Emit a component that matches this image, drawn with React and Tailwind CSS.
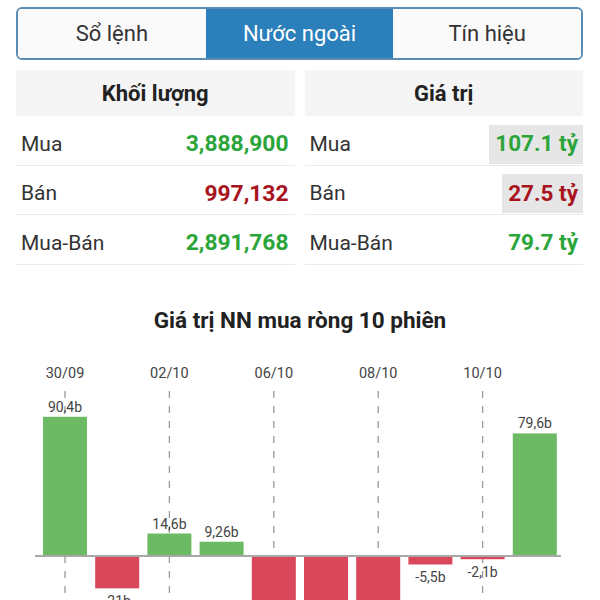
import React from 'react';

const tabs = ['Sổ lệnh', 'Nước ngoài', 'Tín hiệu'];

const volumeRows = [
  { label: 'Mua', value: '3,888,900', tone: 'text-[#2ba53a]' },
  { label: 'Bán', value: '997,132', tone: 'text-[#a8141e]' },
  { label: 'Mua-Bán', value: '2,891,768', tone: 'text-[#2ba53a]' },
];

const valueRows = [
  { label: 'Mua', value: '107.1 tỷ', tone: 'text-[#2ba53a]', hl: true },
  { label: 'Bán', value: '27.5 tỷ', tone: 'text-[#a8141e]', hl: true },
  { label: 'Mua-Bán', value: '79.7 tỷ', tone: 'text-[#2ba53a]', hl: false },
];

// net foreign buy per session (b = tỷ); labels of the deep red bars fall below the fold
const bars = [
  { v: 90.4, text: '90,4b' },
  { v: -21, text: '-21b' },
  { v: 14.6, text: '14,6b' },
  { v: 9.26, text: '9,26b' },
  { v: -62, text: null },
  { v: -58, text: null },
  { v: -60, text: null },
  { v: -5.5, text: '-5,5b' },
  { v: -2.1, text: '-2,1b' },
  { v: 79.6, text: '79,6b' },
];

const dates = [
  { i: 0, text: '30/09' },
  { i: 2, text: '02/10' },
  { i: 4, text: '06/10' },
  { i: 6, text: '08/10' },
  { i: 8, text: '10/10' },
];

const BASE = 556;
const SCALE = 1.54;
const cx = (i) => 65 + i * 52.2;

function StatTable({ title, rows, boxed }) {
  return (
    <div className="flex flex-col">
      <div className="h-[46px] flex items-center justify-center bg-[#f5f5f5] text-[22px] font-bold text-[#222]">
        {title}
      </div>
      {rows.map((r) => (
        <div key={r.label} className="h-[49.5px] pt-[8px] flex items-center justify-between border-b border-[#ececec]">
          <span className="pl-[5px] text-[21px] text-[#333]">{r.label}</span>
          {boxed ? (
            <span className={`h-[39px] flex items-center pl-[6px] pr-[5px] text-[22.5px] font-bold ${r.tone} ${r.hl ? 'bg-[#e6e6e6]' : ''}`}>
              {r.value}
            </span>
          ) : (
            <span className={`pr-[6px] text-[22.8px] font-bold ${r.tone}`}>{r.value}</span>
          )}
        </div>
      ))}
    </div>
  );
}

function NetChart() {
  return (
    <svg width="600" height="270" viewBox="0 340 600 270" className="block" fontFamily="Roboto, 'Liberation Sans', sans-serif">
      {dates.map((d) => (
        <g key={d.text}>
          <text x={cx(d.i)} y={378} textAnchor="middle" fontSize="14.5" fill="#444">{d.text}</text>
          <line x1={cx(d.i)} y1={391} x2={cx(d.i)} y2={610} stroke="#9a9a9a" strokeWidth="1.3" strokeDasharray="7 8" />
        </g>
      ))}
      {bars.map((b, i) => {
        const h = Math.abs(b.v) * SCALE;
        const y = b.v >= 0 ? BASE - h : BASE;
        return (
          <rect key={i} x={cx(i) - 22} y={y} width="44" height={h} fill={b.v >= 0 ? '#6cbb64' : '#d8485a'} />
        );
      })}
      <line x1="35" y1={BASE} x2="561" y2={BASE} stroke="#a8a8a8" strokeWidth="2" />
      {bars.map((b, i) => {
        if (!b.text) return null;
        const h = Math.abs(b.v) * SCALE;
        const y = b.v >= 0 ? BASE - h - 5 : BASE + h + 18;
        return (
          <text key={i} x={cx(i)} y={y} textAnchor="middle" fontSize="14" fill="#444">{b.text}</text>
        );
      })}
    </svg>
  );
}

export default function App() {
  return (
    <div className="w-[600px] h-[600px] overflow-hidden bg-white font-['Roboto','Liberation_Sans',sans-serif]">
      <div className="pl-[16px] pr-[17px] pt-[7px]">
        {/* Tabs */}
        <div className="h-[53px] flex border-2 border-[#5b8db4] rounded-[6px] overflow-hidden">
          {tabs.map((t, i) => (
            <div
              key={t}
              className={`flex-1 flex items-center justify-center text-[22px] ${
                i === 1 ? 'bg-[#2b7fba] text-white' : 'bg-[#fafafa] text-[#333]'
              }`}
            >
              {t}
            </div>
          ))}
        </div>

        {/* Stats */}
        <div className="mt-[10px] grid grid-cols-2 gap-[10px]">
          <StatTable title="Khối lượng" rows={volumeRows} />
          <StatTable title="Giá trị" rows={valueRows} boxed />
        </div>
      </div>

      {/* Chart */}
      <div className="mt-[42px] text-center text-[22.5px] font-bold text-[#222] leading-[26px]">
        Giá trị NN mua ròng 10 phiên
      </div>
      <div className="mt-[7px]">
        <NetChart />
      </div>
    </div>
  );
}
